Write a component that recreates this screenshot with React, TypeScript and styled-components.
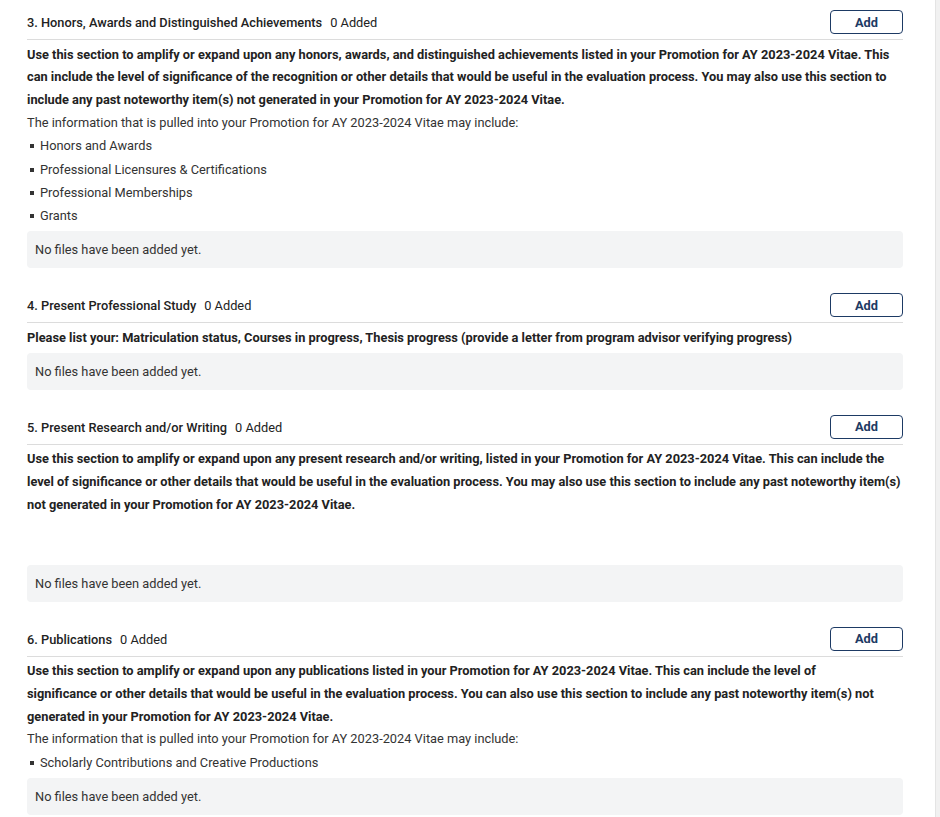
import React from "react"
import styled, { createGlobalStyle } from "styled-components"

const GlobalStyle = createGlobalStyle`
  html, body {
    margin: 0;
    padding: 0;
    background: #fff;
  }
  body {
    font-family: Roboto, "Liberation Sans", Arial, sans-serif;
    color: #333;
  }
`

type SectionData = {
  title: string
  // each entry starts on a new line, as in the saved rich text
  intro: string[]
  includes?: string[]
  spacer?: boolean
}

const sections: SectionData[] = [
  {
    title: "3. Honors, Awards and Distinguished Achievements",
    intro: [
      "Use this section to amplify or expand upon any honors, awards, and distinguished achievements listed in your Promotion for AY 2023-2024 Vitae. This can include the level of significance of the recognition or other details that would be useful in the evaluation process. You may also use this section to include any past noteworthy item(s) not generated in your Promotion for AY 2023-2024 Vitae.",
    ],
    includes: [
      "Honors and Awards",
      "Professional Licensures & Certifications",
      "Professional Memberships",
      "Grants",
    ],
  },
  {
    title: "4. Present Professional Study",
    intro: [
      "Please list your: Matriculation status, Courses in progress, Thesis progress (provide a letter from program advisor verifying progress)",
    ],
  },
  {
    title: "5. Present Research and/or Writing",
    intro: [
      "Use this section to amplify or expand upon any present research and/or writing, listed in your Promotion for AY 2023-2024 Vitae. This can include the level of significance or other details that would be useful in the evaluation process. You may also use this section to include any past noteworthy item(s) not generated in your Promotion for AY 2023-2024 Vitae.",
    ],
    spacer: true,
  },
  {
    title: "6. Publications",
    intro: [
      "Use this section to amplify or expand upon any publications listed in your Promotion for AY 2023-2024 Vitae. This can include the level of",
      "significance or other details that would be useful in the evaluation process. You can also use this section to include any past noteworthy item(s) not generated in your Promotion for AY 2023-2024 Vitae.",
    ],
    includes: ["Scholarly Contributions and Creative Productions"],
  },
]

export default function App() {
  return <Page>
    <GlobalStyle/>
    <Content>
      {sections.map(s => <Section key={s.title}>
        <Header>
          <Title>
            {s.title}
            <Count>0 Added</Count>
          </Title>
          <AddButton type="button">Add</AddButton>
        </Header>
        <Body>
          <Intro>
            {s.intro.map((line, i) => <React.Fragment key={i}>
              {i > 0 && <br/>}
              {line}
            </React.Fragment>)}
          </Intro>
          {s.includes && <>
            <Info>The information that is pulled into your Promotion for AY 2023-2024 Vitae may include:</Info>
            <List>
              {s.includes.map(i => <Item key={i}>{i}</Item>)}
            </List>
          </>}
          {s.spacer && <Spacer/>}
        </Body>
        <Empty>No files have been added yet.</Empty>
      </Section>)}
    </Content>
    <Scrollbar/>
  </Page>
}

const Page = styled.div`
  display: flex;
  width: 940px;
  height: 817px;
  overflow: hidden;
`

const Content = styled.div`
  flex: 1;
  padding: 10px 32px 0 27px;
`

const Scrollbar = styled.div`
  box-sizing: border-box;
  flex: 0 0 5px;
  background: #f1f1f1;
  border-left: 1px solid #e4e4e4;
`

const Section = styled.section`
  margin-bottom: 25px;
`

const Header = styled.div`
  display: flex;
  align-items: center;
  justify-content: space-between;
  padding-bottom: 5px;
  border-bottom: 1px solid #dcdcdc;
`

const Title = styled.div`
  padding-top: 1px;
  font-size: 12.8px;
  font-weight: 500;
  color: #222;
`

const Count = styled.span`
  font-weight: 400;
  margin-left: 8px;
`

const AddButton = styled.button`
  width: 73px;
  height: 24px;
  border: 1.5px solid #1d3a64;
  border-radius: 4px;
  background: #fff;
  color: #1d3a64;
  font-family: inherit;
  font-size: 12.8px;
  font-weight: 700;
  padding: 0;
`

const Body = styled.div`
  padding-top: 3.5px;
  font-size: 12.8px;
  line-height: 22.7px;
`

const Intro = styled.p`
  margin: 0;
  font-weight: 700;
  color: #222;
`

const Info = styled.p`
  margin: 0;
`

const List = styled.ul`
  list-style: none;
  margin: 0;
  padding: 0;
`

const Item = styled.li`
  position: relative;
  padding-left: 13px;
  line-height: 23.3px;

  &::before {
    content: "";
    position: absolute;
    left: 3px;
    top: 10px;
    width: 4px;
    height: 4px;
    background: #333;
  }
`

const Spacer = styled.div`
  height: 45px;
`

const Empty = styled.div`
  margin-top: 3.5px;
  height: 37px;
  display: flex;
  align-items: center;
  padding: 0 8px;
  background: #f3f4f5;
  border-radius: 4px;
  font-size: 12.8px;
`
